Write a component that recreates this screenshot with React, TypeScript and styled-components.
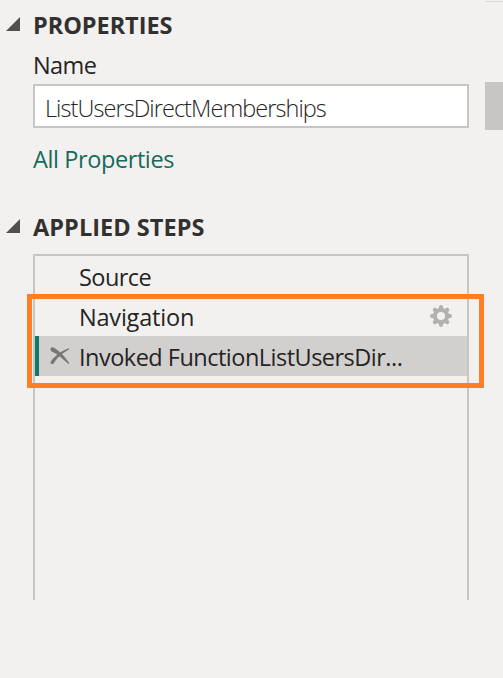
import React from 'react';
import styled, { createGlobalStyle } from 'styled-components';

const GlobalStyle = createGlobalStyle`
  * { box-sizing: border-box; }
  body {
    margin: 0;
    background: #f3f1ef;
    overflow: hidden;
    font-family: "Segoe UI", "Open Sans", "Noto Sans", sans-serif;
    color: #252423;
  }
`;

const Pane = styled.main`
  position: relative;
  width: 503px;
  height: 678px;
  overflow: hidden;
  background: #f3f1ef;
`;

const Section = styled.section`
  width: 469px;
  padding-left: 33px;
`;

const SectionHeader = styled.header<{ $top: number }>`
  display: flex;
  align-items: center;
  height: 34px;
  margin: ${p => p.$top}px 0 0 -27px;
`;

const Caret = styled.svg`
  flex: none;
  width: 14px;
  height: 14px;
  margin: 0 13px 2px 0;
  fill: #505050;
`;

const Title = styled.h2<{ $spacing: number }>`
  margin: 0;
  font-size: 23.5px;
  line-height: 34px;
  font-weight: 700;
  color: #323130;
  white-space: nowrap;
  letter-spacing: ${p => p.$spacing}px;
`;

const Label = styled.label`
  display: block;
  height: 34px;
  margin-top: 6px;
  font-size: 23.5px;
  line-height: 34px;
  letter-spacing: -0.6px;
`;

const NameInput = styled.div`
  height: 44px;
  margin-top: 2px;
  width: 436px;
  padding: 2px 10px 0;
  border: 2px solid #c8c6c4;
  background: #fff;
  font-size: 23.5px;
  line-height: 40px;
  font-weight: 300;
  letter-spacing: -0.93px;
  white-space: nowrap;
`;

const Link = styled.a`
  display: block;
  height: 34px;
  margin-top: 14px;
  font-size: 23.5px;
  line-height: 34px;
  letter-spacing: -0.4px;
  color: #136b5b;
`;

const StepList = styled.ul`
  width: 436px;
  height: 346px;
  margin: 10px 0 0;
  padding: 0;
  list-style: none;
  border: 2px solid #c8c6c4;
  border-bottom: 0;
`;

const Step = styled.li<{ $selected?: boolean }>`
  display: flex;
  align-items: center;
  height: 40px;
  padding-right: 15px;
  border-left: 4px solid ${p => (p.$selected ? '#117865' : 'transparent')};
  background: ${p => (p.$selected ? '#d2d0ce' : 'transparent')};
  background-clip: padding-box;
`;

const IconSlot = styled.span`
  display: flex;
  flex: none;
  width: 40px;
  padding-left: 11px;
`;

const StepName = styled.span<{ $spacing: number }>`
  flex: 1;
  padding-top: 2px;
  font-size: 23.5px;
  line-height: 38px;
  white-space: nowrap;
  letter-spacing: ${p => p.$spacing}px;
`;

const Highlight = styled.div`
  position: absolute;
  left: 27px;
  top: 294px;
  width: 457px;
  height: 94px;
  border: 5px solid #ff7f27;
`;

const ScrollThumb = styled.div`
  position: absolute;
  right: 0;
  top: 82px;
  width: 18px;
  height: 48px;
  background: #c8c6c4;
`;

const TopRule = styled.div`
  position: absolute;
  right: 0;
  top: 1px;
  width: 18px;
  height: 1px;
  background: #d8dcdf;
`;

const ExpandedCaret = () => (
  <Caret viewBox="0 0 14 14"><path d="M14 0V14H0Z" /></Caret>
);

const DeleteIcon = () => (
  <svg width="20" height="18" viewBox="0 0 20 18" fill="#797775">
    <path d="M.3 1.800C.8.2 2.600-.3 4.200.8c5 3 10 8 15.100 15.200l-.8 1.100C13 12 8 7.200 1.200 4.200Z" />
    <path d="M18.800 1.300 19.300 2.300C12.500 6 7 10.500 3.600 16.500c-.8 1.200-3.600.6-3-1.200C3.300 10.200 10 4.400 18.800 1.300Z" />
  </svg>
);

const teeth = [0, 45, 90, 135, 180, 225, 270, 315];

const GearIcon = () => (
  <svg width="22" height="22" viewBox="0 0 22 22" fill="#b3b1b0">
    {teeth.map(angle => (
      <path key={angle} d="M8.200 5 9.300 .8Q11-.6 12.700 .8L13.800 5Z" transform={`rotate(${angle} 11 11)`} />
    ))}
    <circle cx="11" cy="11" r="6" fill="none" stroke="#b3b1b0" strokeWidth="4" />
  </svg>
);

const steps = [
  { name: 'Source', spacing: -0.55 },
  { name: 'Navigation', spacing: -0.2, settings: true },
  { name: 'Invoked FunctionListUsersDir...', spacing: -0.51, selected: true },
];

export default function App() {
  return (
    <>
      <GlobalStyle />
      <Pane>
        <Section>
          <SectionHeader $top={8}>
            <ExpandedCaret />
            <Title $spacing={-0.05}>PROPERTIES</Title>
          </SectionHeader>
          <Label>Name</Label>
          <NameInput>ListUsersDirectMemberships</NameInput>
          <Link>All Properties</Link>
        </Section>
        <Section>
          <SectionHeader $top={34}>
            <ExpandedCaret />
            <Title $spacing={0.05}>APPLIED STEPS</Title>
          </SectionHeader>
          <StepList>
            {steps.map(step => (
              <Step key={step.name} $selected={step.selected}>
                <IconSlot>{step.selected && <DeleteIcon />}</IconSlot>
                <StepName $spacing={step.spacing}>{step.name}</StepName>
                {step.settings && <GearIcon />}
              </Step>
            ))}
          </StepList>
        </Section>
        <Highlight />
        <ScrollThumb />
        <TopRule />
      </Pane>
    </>
  );
}
